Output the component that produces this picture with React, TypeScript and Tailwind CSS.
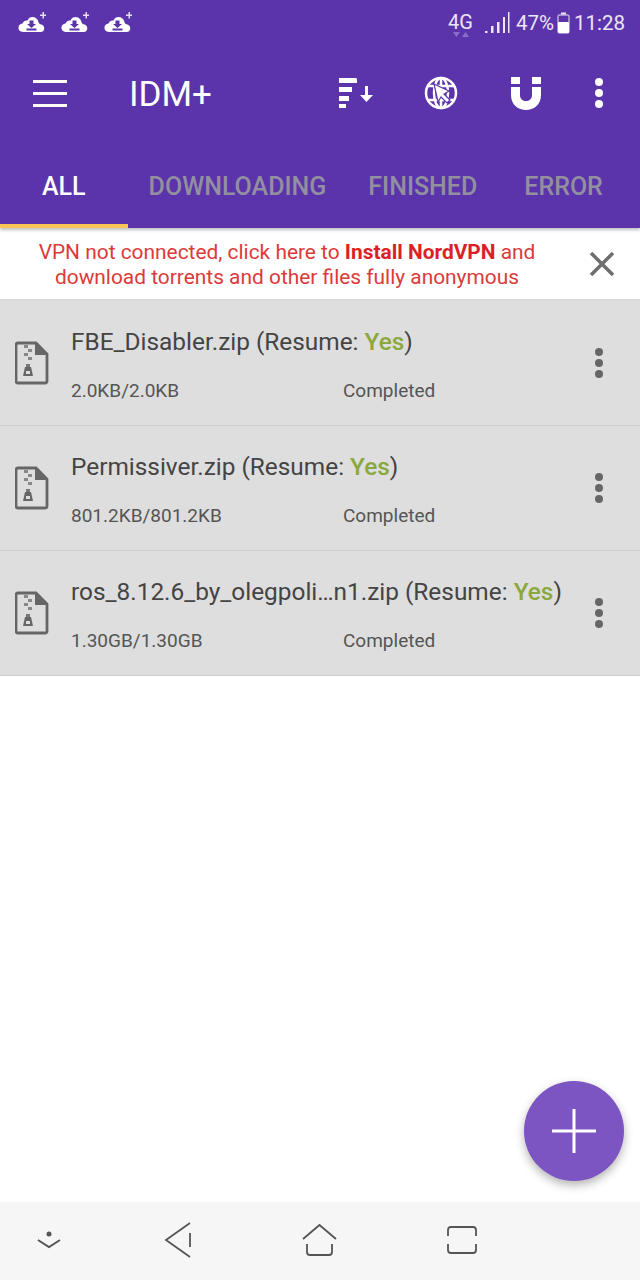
import React from "react";

const font = "font-['Roboto',sans-serif]";

function CloudIcon() {
  return (
    <svg width="28" height="22" viewBox="0 0 28 22">
      <path d="M5 21C-1 21 -1 13 4.500 12.500C5.500 10 7.500 9 9.500 9.500C11.500 4.500 19 5 20.500 11C21 12.500 21.500 13 22.500 13.200C27.500 14 27.500 21 22.500 21Z" fill="white" />
      <path d="M11.500 9.500H15.500V13H18L13.500 17L9 13H11.500Z M8.500 17.500H18.500V19.500H8.500Z" fill="#5b34ab" />
      <path d="M22 3.500H24.500V1H26V3.500H28V5H26V7.500H24.500V5H22Z" fill="#e6dff3" />
    </svg>
  );
}

function StatusBar() {
  return (
    <div className="flex h-[46px] items-center justify-between pl-[18px] pr-[15px]">
      <div className="flex gap-[15px] -mt-[2px]">
        <CloudIcon />
        <CloudIcon />
        <CloudIcon />
      </div>
      <div className="flex items-center text-[20.500px] text-[#ece6f6]">
        <div className="relative mr-[11px] -mt-[3px] text-[20px] leading-none">
          4G
          <svg className="absolute left-[4px] top-[19px]" width="22" height="7" viewBox="0 0 22 7">
            <path d="M1 1H8L4.500 6Z M10 6H17L13.500 1Z" fill="#8a6fc9" />
          </svg>
        </div>
        <svg width="26" height="24" viewBox="0 0 26 24" className="mr-[6px]">
          <path d="M1 20H3.500V22H1Z M7 15H9.500V22H7Z M13 11H15.500V22H13Z M19 6H21V22H19Z M24 1H25.500V22H24Z" fill="#ece6f6" />
        </svg>
        <span>47%</span>
        <svg width="13" height="22" viewBox="0 0 13 22" className="ml-[3px] mr-[4px]">
          <path d="M4 0.500H9V2.500H4Z" fill="#ece6f6" />
          <rect x="1" y="3" width="11" height="18" rx="1" fill="none" stroke="#ece6f6" strokeWidth="1" />
          <rect x="1" y="10" width="11" height="11" rx="1" fill="#fff" />
        </svg>
        <span>11:28</span>
      </div>
    </div>
  );
}

function Toolbar() {
  return (
    <div className="flex h-[94px] items-center text-white">
      <div className="ml-[33px] flex w-[34px] flex-col gap-[9px]">
        <div className="h-[3px] bg-white" />
        <div className="h-[3px] bg-white" />
        <div className="h-[3px] bg-white" />
      </div>
      <div className="ml-[62px] mt-[2px] text-[35px] font-normal leading-none">IDM+</div>
      <svg className="ml-[127px]" width="36" height="30" viewBox="0 0 36 30">
        <path d="M0 0H17Q18 0 18 2V5H0Z M0 9H13V14H0Z M0 18H10V23H0Z M0 26H7V30H0Z" fill="white" />
        <path d="M26 8H29V17H34L27.500 24L21 17H26Z" fill="white" />
      </svg>
      <svg className="ml-[49px]" width="34" height="34" viewBox="0 0 34 34" fill="none" stroke="white" strokeWidth="2.500">
        <circle cx="17" cy="17" r="15" />
        <ellipse cx="17" cy="17" rx="7" ry="15" />
        <path d="M3 10H31M3 24H31M17 2V32" />
        <path d="M10 8L25 15L20 18L26 24L23 27L17 21L14 26Z" fill="white" stroke="#5b34ab" strokeWidth="1.200" />
      </svg>
      <svg className="ml-[52px]" width="32" height="33" viewBox="0 0 32 33">
        <path d="M1 0H10V7H1Z M22 0H31V7H22Z M1 10H10V18C10 26 22 26 22 18V10H31V18C31 38 1 38 1 18Z" fill="white" />
      </svg>
      <div className="ml-[53px] flex flex-col gap-[3px]">
        <div className="size-[8px] rounded-full bg-white" />
        <div className="size-[8px] rounded-full bg-white" />
        <div className="size-[8px] rounded-full bg-white" />
      </div>
    </div>
  );
}

function Tabs() {
  return (
    <div className="relative flex h-[88px] items-center pt-[6px] text-[25px] font-medium text-[#92909f] shadow-[0_2px_3px_rgba(0,0,0,0.25)]">
      <span className="ml-[42px] text-white">ALL</span>
      <span className="ml-[63px]">DOWNLOADING</span>
      <span className="ml-[42px]">FINISHED</span>
      <span className="ml-[47px]">ERROR</span>
      <div className="absolute bottom-0 left-0 h-[4px] w-[128px] bg-[#f8c655]" />
    </div>
  );
}

function Banner() {
  return (
    <div className="flex h-[73px] items-center border-b-2 border-[#d8d8d8] bg-white">
      <div className="w-[574px] pt-[3px] text-center text-[20.900px] leading-[25px] text-[#dc3a3a]">
        <div>
          VPN not connected, click here to <span className="font-bold text-[#dd1f26]">Install NordVPN</span> and
        </div>
        <div>download torrents and other files fully anonymous</div>
      </div>
      <svg className="ml-[15px]" width="26" height="26" viewBox="0 0 26 26" stroke="#6e6e6e" strokeWidth="3.500">
        <path d="M2 2L24 24M24 2L2 24" />
      </svg>
    </div>
  );
}

function ZipIcon() {
  return (
    <svg width="34" height="44" viewBox="0 0 34 44">
      <path d="M3 2H21L32 13V40Q32 42 30 42H3Q1 42 1 40V4Q1 2 3 2Z" fill="none" stroke="#666" strokeWidth="2.800" />
      <path d="M20 1L33 14H20Z" fill="#666" />
      <path d="M9 4H13V7H9Z M13 8H17V11H13Z M9 12H13V15H9Z M13 16H17V19H13Z" fill="#888" />
      <path d="M11 23H15V26H11Z" fill="#777" />
      <path d="M10 26H16L18 35H8Z" fill="#666" />
      <rect x="11" y="30" width="4" height="3" fill="#ddd" />
    </svg>
  );
}

const rows = [
  { name: "FBE_Disabler.zip", size: "2.0KB/2.0KB" },
  { name: "Permissiver.zip", size: "801.2KB/801.2KB" },
  { name: "ros_8.12.6_by_olegpoli…n1.zip", size: "1.30GB/1.30GB" },
];

function Row({ name, size }: { name: string; size: string }) {
  return (
    <div className="flex h-[125px] items-center border-b border-[#cfcfcf] bg-[#dedede] pl-[15px]">
      <ZipIcon />
      <div className="ml-[22px] flex-1 self-start pt-[25px]">
        <div className="text-[24.400px] leading-[32px] text-[#444]">
          {name} (Resume: <span className="font-medium text-[#8aa83c]">Yes</span>)
        </div>
        <div className="mt-[21px] flex text-[19px] leading-[24px] text-[#555]">
          <span className="w-[272px]">{size}</span>
          <span>Completed</span>
        </div>
      </div>
      <div className="mr-[37px] flex flex-col gap-[3px]">
        <div className="size-[8px] rounded-full bg-[#666]" />
        <div className="size-[8px] rounded-full bg-[#666]" />
        <div className="size-[8px] rounded-full bg-[#666]" />
      </div>
    </div>
  );
}

function NavBar() {
  return (
    <div className="flex h-[78px] items-center bg-[#f6f6f6] pb-[2px]">
      <svg className="ml-[37px]" width="24" height="20" viewBox="0 0 24 20" fill="none" stroke="#555" strokeWidth="2">
        <circle cx="12" cy="4" r="2.500" fill="#555" stroke="none" />
        <path d="M1 10L12 17L23 10" />
      </svg>
      <svg className="ml-[103px]" width="28" height="36" viewBox="0 0 28 36" fill="none" stroke="#555" strokeWidth="1.800">
        <path d="M26 1L2 18L26 35M26 11V25" />
      </svg>
      <svg className="ml-[110px]" width="36" height="34" viewBox="0 0 36 34" fill="none" stroke="#555" strokeWidth="1.800">
        <path d="M1 16L17.500 2L34 16M5 21V29Q5 32 8 32H27Q30 32 30 29V21" />
      </svg>
      <svg className="ml-[109px]" width="32" height="30" viewBox="0 0 32 30" fill="none" stroke="#555" strokeWidth="1.800">
        <path d="M1 11V5Q1 2 4 2H26Q29 2 29 5V11M1 19V25Q1 28 4 28H26Q29 28 29 25V19" />
      </svg>
    </div>
  );
}

export default function App() {
  return (
    <div className={`relative flex h-[1280px] w-[640px] flex-col overflow-hidden bg-white ${font}`}>
      <div className="bg-[#5b34ab]">
        <StatusBar />
        <Toolbar />
        <Tabs />
      </div>
      <Banner />
      {rows.map((r) => (
        <Row key={r.name} name={r.name} size={r.size} />
      ))}
      <div className="flex-1" />
      <NavBar />
      <button className="absolute left-[524px] top-[1081px] flex size-[100px] items-center justify-center rounded-full bg-[#7c55c3] shadow-[0_4px_10px_rgba(0,0,0,0.3)]">
        <svg width="44" height="44" viewBox="0 0 44 44" stroke="white" strokeWidth="3">
          <path d="M22 0V44M0 22H44" />
        </svg>
      </button>
    </div>
  );
}
